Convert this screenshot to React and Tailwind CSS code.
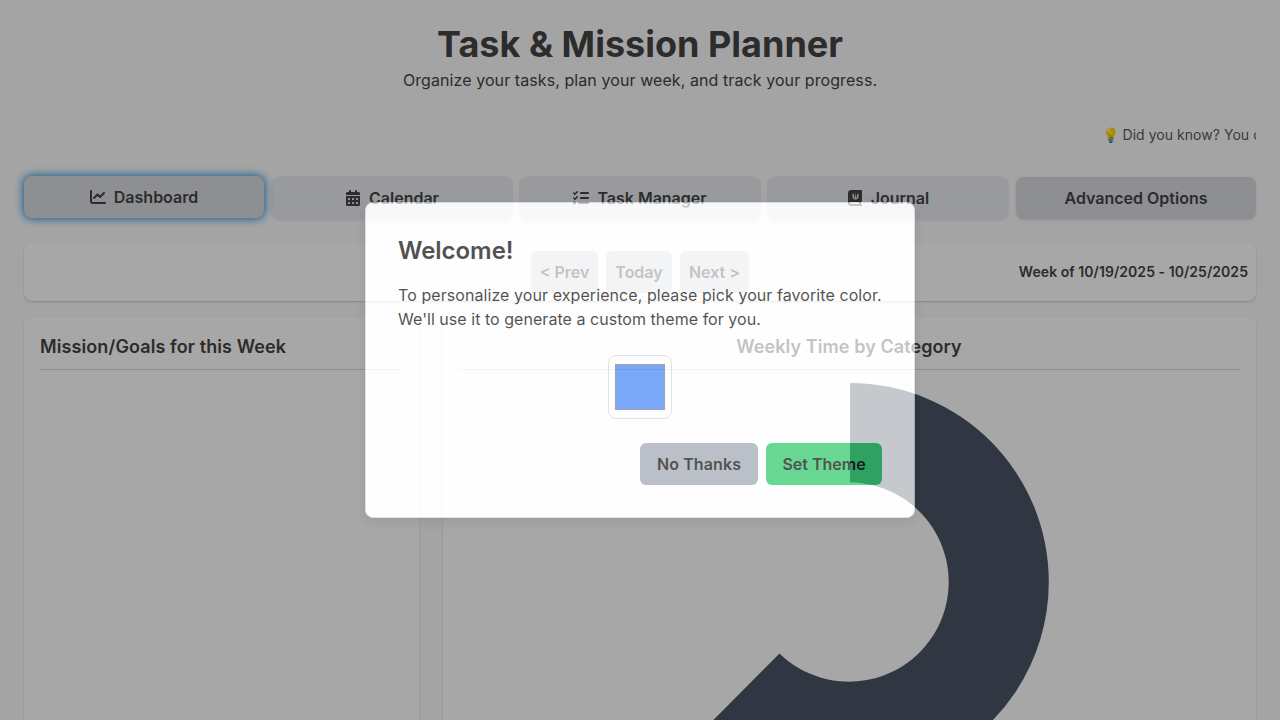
import { FaChartLine, FaCalendarDays, FaListCheck, FaBookJournalWhills } from "react-icons/fa6";

function Tab({ icon, label, className }) {
  return (
    <button className={"flex h-[42px] flex-1 items-center justify-center gap-2 rounded-lg text-base font-semibold " + className}>
      {icon}
      <span>{label}</span>
    </button>
  );
}

export default function App() {
  return (
    <div className="relative h-[720px] w-[1280px] overflow-hidden bg-[#f9f9f9] px-6 pt-6 font-['Inter',sans-serif] text-[#444444]">
      <header className="flex flex-col items-center">
        <h1 className="h-10 text-4xl leading-10 font-bold">Task &amp; Mission Planner</h1>
        <p className="mt-1 text-base tracking-[0.08px]">Organize your tasks, plan your week, and track your progress.</p>
      </header>

      <div className="mt-[33px] flex h-5 overflow-hidden pl-[1077.5px] text-sm leading-5 tracking-[0.04px] whitespace-nowrap text-[#5a5a5a]">
        <span>💡 Did you know? You can</span>
      </div>

      <nav className="mt-8 flex gap-2">
        <Tab icon={<FaChartLine />} label="Dashboard" className="-translate-y-px bg-[#d8dae0] shadow-[0_0_8px_1px_#2b8fd8]" />
        <Tab icon={<FaCalendarDays />} label="Calendar" className="bg-[#e8eaef] shadow-[0_0_0_1px_#eaebef,0_1px_3px_rgba(0,0,0,0.1)]" />
        <Tab icon={<FaListCheck />} label="Task Manager" className="bg-[#e8eaef] shadow-[0_0_0_1px_#eaebef,0_1px_3px_rgba(0,0,0,0.1)]" />
        <Tab icon={<FaBookJournalWhills />} label="Journal" className="bg-[#e8eaef] shadow-[0_0_0_1px_#eaebef,0_1px_3px_rgba(0,0,0,0.1)]" />
        <Tab label="Advanced Options" className="bg-[#d8dae0] shadow-sm" />
      </nav>

      <section className="mt-6 grid h-[58px] grid-cols-[1fr_auto_1fr] items-center rounded-lg bg-[#fefefe] px-2 shadow-[0_1px_2px_rgba(0,0,0,0.2)]">
        <span />
        <div className="flex gap-2 text-base font-semibold">
          <button className="h-[42px] w-[67px] rounded-md bg-[#dcdfe4]">&lt; Prev</button>
          <button className="h-[42px] w-[66px] rounded-md bg-[#dcdfe4]">Today</button>
          <button className="h-[42px] w-[69px] rounded-md bg-[#dcdfe4]">Next &gt;</button>
        </div>
        <span className="text-right text-sm font-semibold tracking-[0.05px]">Week of 10/19/2025 - 10/25/2025</span>
      </section>

      <main className="mt-4 grid h-[600px] grid-cols-[395px_1fr] gap-6">
        <section className="rounded-lg bg-[#fefefe] p-4 shadow-[0_1px_2px_rgba(0,0,0,0.15)]">
          <h2 className="border-b border-[#d8dae0] pb-2 text-lg leading-7 font-semibold tracking-[0.1px]">Mission/Goals for this Week</h2>
        </section>
        <section className="rounded-lg bg-[#fefefe] p-4 shadow-[0_1px_2px_rgba(0,0,0,0.15)]">
          <h2 className="border-b border-[#d8dae0] pb-2 text-center text-lg leading-7 font-semibold tracking-[0.08px]"><span className="mr-px">Weekly Time by Category</span></h2>
          <svg className="mx-auto mt-[13px] block" width="398" height="398" viewBox="-199 -199 398 398">
            <path fill="#4b5565" d="M0 -199A198.8 198.8 0 0 1 198.8 0A198.8 198.8 0 0 1 -139.8 141.2L-70.5 71.5A99.7 99.7 0 1 0 0 -99.7Z" />
          </svg>
        </section>
      </main>

      <div className="absolute inset-0 flex items-center justify-center">
        <div className="h-[316px] w-[550px] rounded-lg border border-[#d1d5db] bg-white p-8 text-black opacity-[0.68] shadow-[0_4px_12px_rgba(0,0,0,0.15),0_0_0_1300px_rgba(0,0,0,0.5)]">
          <h2 className="text-2xl leading-8 font-semibold tracking-[-0.05px]">Welcome!</h2>
          <p className="mt-4 text-base leading-6 tracking-[0.075px]">To personalize your experience, please pick your favorite color.<br /><span className="tracking-[0.04px]">We'll use it to generate a custom theme for you.</span></p>
          <div className="mt-6 flex justify-center">
            <div className="flex h-16 w-16 items-center justify-center rounded-lg border border-[#d1d5db]">
              <div className="h-[46px] w-[50px] border border-[#777777] bg-[#3b82f6]" />
            </div>
          </div>
          <div className="mt-6 flex justify-end gap-2 text-base font-semibold">
            <button className="h-[42px] w-[118px] rounded-md bg-[#9ca3af] tracking-[0.1px]">No Thanks</button>
            <button className="h-[42px] w-[116px] rounded-md bg-[#22c55e]">Set Theme</button>
          </div>
        </div>
      </div>
    </div>
  );
}
